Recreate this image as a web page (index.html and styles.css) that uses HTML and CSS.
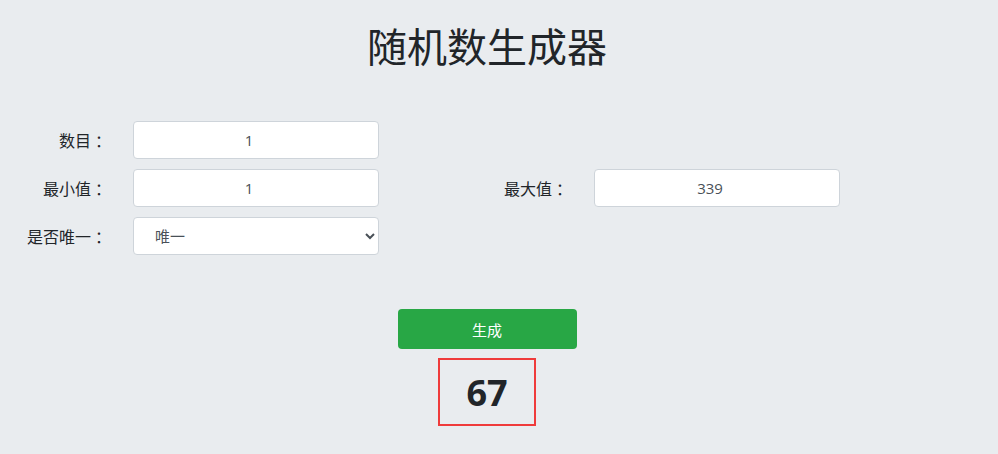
FILE: index.html
```html
<!DOCTYPE html>
<html lang="zh-CN">
<head>
    <meta charset="UTF-8">
    <meta name="viewport" content="width=device-width, initial-scale=1.0">
    <title>随机数生成器</title>
    <link rel="stylesheet" href="styles.css">
</head>
<body>
    <div class="page">
        <h1>随机数生成器</h1>

        <div class="form-grid">
            <label class="label" for="count">数目<span class="colon">：</span></label>
            <input class="field" id="count" type="text" value="1">
            <span></span>
            <span></span>
            <span></span>

            <label class="label" for="min">最小值<span class="colon">：</span></label>
            <input class="field" id="min" type="text" value="1">
            <span></span>
            <label class="label" for="max">最大值<span class="colon">：</span></label>
            <input class="field" id="max" type="text" value="339">

            <label class="label" for="unique">是否唯一<span class="colon">：</span></label>
            <select class="field select" id="unique">
                <option>唯一</option>
                <option>不唯一</option>
            </select>
        </div>

        <div class="actions">
            <button class="btn-generate" onclick="generate()">生成</button>
            <div class="result" id="result">67</div>
        </div>
    </div>

    <script>
        function generate() {
            const count = parseInt(document.getElementById('count').value) || 1;
            const min = parseInt(document.getElementById('min').value) || 0;
            const max = parseInt(document.getElementById('max').value) || 0;
            const nums = [];
            for (let i = 0; i < count; i++) {
                nums.push(Math.floor(Math.random() * (max - min + 1)) + min);
            }
            document.getElementById('result').textContent = nums.join(', ');
        }
    </script>
</body>
</html>
```

FILE: styles.css
```css
body {
    margin: 0;
    background-color: #e9ecef;
    color: #212529;
    font-family: "Open Sans", "Noto Sans CJK SC", sans-serif;
}
.page {
    width: 974px;
}
h1 {
    margin: 0;
    padding-top: 20px;
    text-align: center;
    font-size: 40px;
    font-weight: 400;
    line-height: 54px;
    color: #212529;
}
.form-grid {
    display: grid;
    grid-template-columns: 133px 246px 82px 133px 246px;
    grid-auto-rows: 38px;
    row-gap: 10px;
    margin-top: 47px;
}
.label {
    display: flex;
    align-items: center;
    justify-content: flex-end;
    padding-right: 22px;
    font-family: "Noto Sans CJK SC", sans-serif;
    font-size: 16px;
    color: #212529;
}
.label .colon {
    margin-left: 4px;
}
.field {
    box-sizing: border-box;
    height: 38px;
    padding: 0 14px 0 0;
    border: 1px solid #ced4da;
    border-radius: 4px;
    background-color: #fff;
    color: #495057;
    font-family: "Open Sans", "Noto Sans CJK SC", sans-serif;
    font-size: 15px;
    text-align: center;
}
.select {
    text-align: left;
    padding: 0 8px 0 17px;
}
.actions {
    display: flex;
    flex-direction: column;
    align-items: center;
    gap: 9px;
    margin-top: 54px;
}
.btn-generate {
    width: 179px;
    height: 40px;
    border: none;
    border-radius: 4px;
    background-color: #28a745;
    color: #fff;
    font-family: "Open Sans", "Noto Sans CJK SC", sans-serif;
    font-size: 15px;
    cursor: pointer;
}
.btn-generate:hover {
    background-color: #218838;
}
.result {
    box-sizing: border-box;
    min-width: 98px;
    height: 68px;
    padding: 0 24px;
    border: 2px solid #ef3b3b;
    display: flex;
    align-items: center;
    justify-content: center;
    font-size: 36px;
    font-weight: 700;
    color: #212529;
}
```
